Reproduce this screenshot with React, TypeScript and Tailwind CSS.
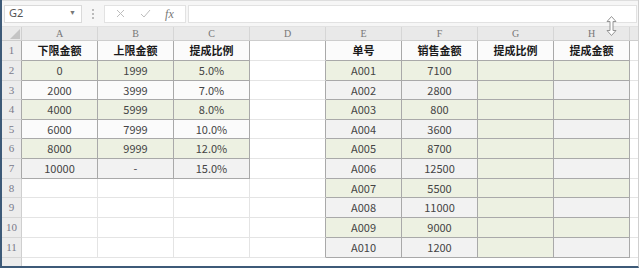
import React from "react";

const GREEN = "bg-[#edf1e2]";
const WHITE = "bg-[#fbfbfb]";
const GRAY = "bg-[#f2f2f2]";

type Cell = { text?: string; bg?: string; bold?: boolean; dark?: boolean; darkRight?: boolean };

const leftTable: [string, string, string][] = [
  ["下限金额", "上限金额", "提成比例"],
  ["0", "1999", "5.0%"],
  ["2000", "3999", "7.0%"],
  ["4000", "5999", "8.0%"],
  ["6000", "7999", "10.0%"],
  ["8000", "9999", "12.0%"],
  ["10000", "-", "15.0%"],
];

const rightTable: [string, string][] = [
  ["单号", "销售金额"],
  ["A001", "7100"],
  ["A002", "2800"],
  ["A003", "800"],
  ["A004", "3600"],
  ["A005", "8700"],
  ["A006", "12500"],
  ["A007", "5500"],
  ["A008", "11000"],
  ["A009", "9000"],
  ["A010", "1200"],
];

const heights = [20, 20, 19, 20, 19, 20, 20, 19, 20, 20, 20];

function buildRow(r: number): Cell[] {
  const cells: Cell[] = [];
  // A-C
  for (let c = 0; c < 3; c++) {
    if (r < 7) {
      let bg = WHITE;
      if (r === 0) bg = WHITE;
      else if (r === 6) bg = GRAY;
      else if (r % 2 === 1) bg = GREEN;
      cells.push({ text: leftTable[r][c], bg, bold: r === 0, dark: true });
    } else {
      cells.push({ bg: "bg-white" });
    }
  }
  // D
  cells.push({ bg: "bg-white", darkRight: true });
  // E-H
  for (let c = 0; c < 4; c++) {
    let bg = WHITE;
    if (r > 0) bg = r % 2 === 1 ? GREEN : GRAY;
    if (c === 2 && r > 0) bg = GREEN;
    let text: string | undefined;
    if (c < 2) text = rightTable[r][c];
    else if (r === 0) text = c === 2 ? "提成比例" : "提成金额";
    cells.push({ text, bg, bold: r === 0, dark: true });
  }
  return cells;
}

function RowNum({ n, h, dark }: { n: number; h: number; dark?: boolean }) {
  return (
    <div
      className={`w-[20px] shrink-0 flex items-center justify-center bg-[#ececec] border-b border-r border-b-[#d6d6d6] ${
        dark ? "border-r-[#a8a8a8]" : "border-r-[#cfcfcf]"
      } text-[11px] text-[#7a7a8a]`}
      style={{ height: h, fontFamily: '"Liberation Serif", "DejaVu Serif", serif' }}
    >
      {n}
    </div>
  );
}

function DataRow({ r }: { r: number }) {
  const cells = buildRow(r);
  const h = heights[r];
  return (
    <div className="flex">
      <RowNum n={r + 1} h={h} dark={r < 7} />
      {cells.map((c, i) => (
        <div
          key={i}
          className={`w-[76px] shrink-0 flex items-center justify-center border-r border-b ${c.bg} ${
            c.dark ? "border-[#a9a9a9]" : c.darkRight ? "border-b-[#e4e4e4] border-r-[#a9a9a9]" : "border-[#e4e4e4]"
          } ${c.bold ? "font-bold text-[#1a1a1a]" : "text-[#444]"} text-[11px] leading-none`}
          style={{ height: h, fontFamily: '"Noto Sans CJK SC", "Noto Sans", sans-serif' }}
        >
          {c.text}
        </div>
      ))}
      <div className="flex-1 bg-white border-b border-[#e4e4e4]" style={{ height: h }} />
    </div>
  );
}

export default function App() {
  const cols = ["A", "B", "C", "D", "E", "F", "G", "H"];
  return (
    <div className="w-[639px] h-[268px] overflow-hidden bg-white border-l-2 border-b-2 border-l-[#3d5a78] border-b-[#3d5a78] border-r border-r-[#cfcfcf] flex flex-col relative">
      {/* formula bar */}
      <div className="h-[26px] shrink-0 bg-[#f6f6f6] flex items-center pl-[2px] pr-[1px] gap-0 border-t border-[#dedede]">
        <div
          className="w-[78px] h-[18px] bg-white border border-[#dadada] flex items-center justify-between pl-[4px] pr-[5px] text-[11px] text-[#555]"
          style={{ fontFamily: '"Noto Sans", sans-serif' }}
        >
          <span>G2</span>
          <span className="text-[7px] text-[#777]">▼</span>
        </div>
        <div className="w-[22px] flex justify-center">
          <div className="flex flex-col gap-[2px]">
            <div className="w-[2px] h-[2px] bg-[#bbb]" />
            <div className="w-[2px] h-[2px] bg-[#bbb]" />
            <div className="w-[2px] h-[2px] bg-[#bbb]" />
          </div>
        </div>
        <div className="w-[82px] h-[18px] bg-white border border-[#e2e2e2] flex items-center justify-around px-[4px]">
          <svg width="9" height="9" viewBox="0 0 9 9">
            <path d="M1 1 L8 8 M8 1 L1 8" stroke="#bdbdbd" strokeWidth="1" />
          </svg>
          <svg width="11" height="9" viewBox="0 0 11 9">
            <path d="M1 5 L4 8 L10 1" stroke="#bdbdbd" strokeWidth="1" fill="none" />
          </svg>
          <span
            className="text-[12px] italic text-[#777]"
            style={{ fontFamily: '"Liberation Serif", serif' }}
          >
            fx
          </span>
        </div>
        <div className="flex-1 h-[18px] bg-white border border-[#e2e2e2] ml-[2px]" />
      </div>
      {/* column header */}
      <div className="flex h-[15px] shrink-0 bg-[#e9e9e9] border-b border-[#cdcdcd] border-t border-t-[#e2e2e2]">
        <div className="w-[20px] shrink-0 border-r border-[#d0d0d0] relative">
          <svg className="absolute right-[1px] bottom-[1px]" width="10" height="10" viewBox="0 0 10 10">
            <path d="M10 0 L10 10 L0 10 Z" fill="#c4c4c4" />
          </svg>
        </div>
        {cols.map((c) => (
          <div
            key={c}
            className="w-[76px] shrink-0 border-r border-[#d6d6d6] flex items-center justify-center text-[10px] text-[#777]"
            style={{ fontFamily: '"Liberation Serif", "DejaVu Serif", serif' }}
          >
            {c}
          </div>
        ))}
        <div className="flex-1" />
      </div>
      {Array.from({ length: 11 }, (_, r) => (
        <DataRow key={r} r={r} />
      ))}
      <div className="flex flex-1">
        <div className="w-[20px] bg-[#ececec] border-r border-[#cfcfcf]" />
        <div className="flex-1" />
      </div>
      {/* resize cursor */}
      <svg className="absolute left-[604px] top-[16px]" width="11" height="20" viewBox="0 0 11 20">
        <path
          d="M5.5 0.5 L10 5.5 L7 5.5 L7 14.5 L10 14.5 L5.5 19.5 L1 14.5 L4 14.5 L4 5.5 L1 5.5 Z"
          fill="#ffffff"
          stroke="#8a8a8a"
          strokeWidth="0.9"
        />
      </svg>
    </div>
  );
}
